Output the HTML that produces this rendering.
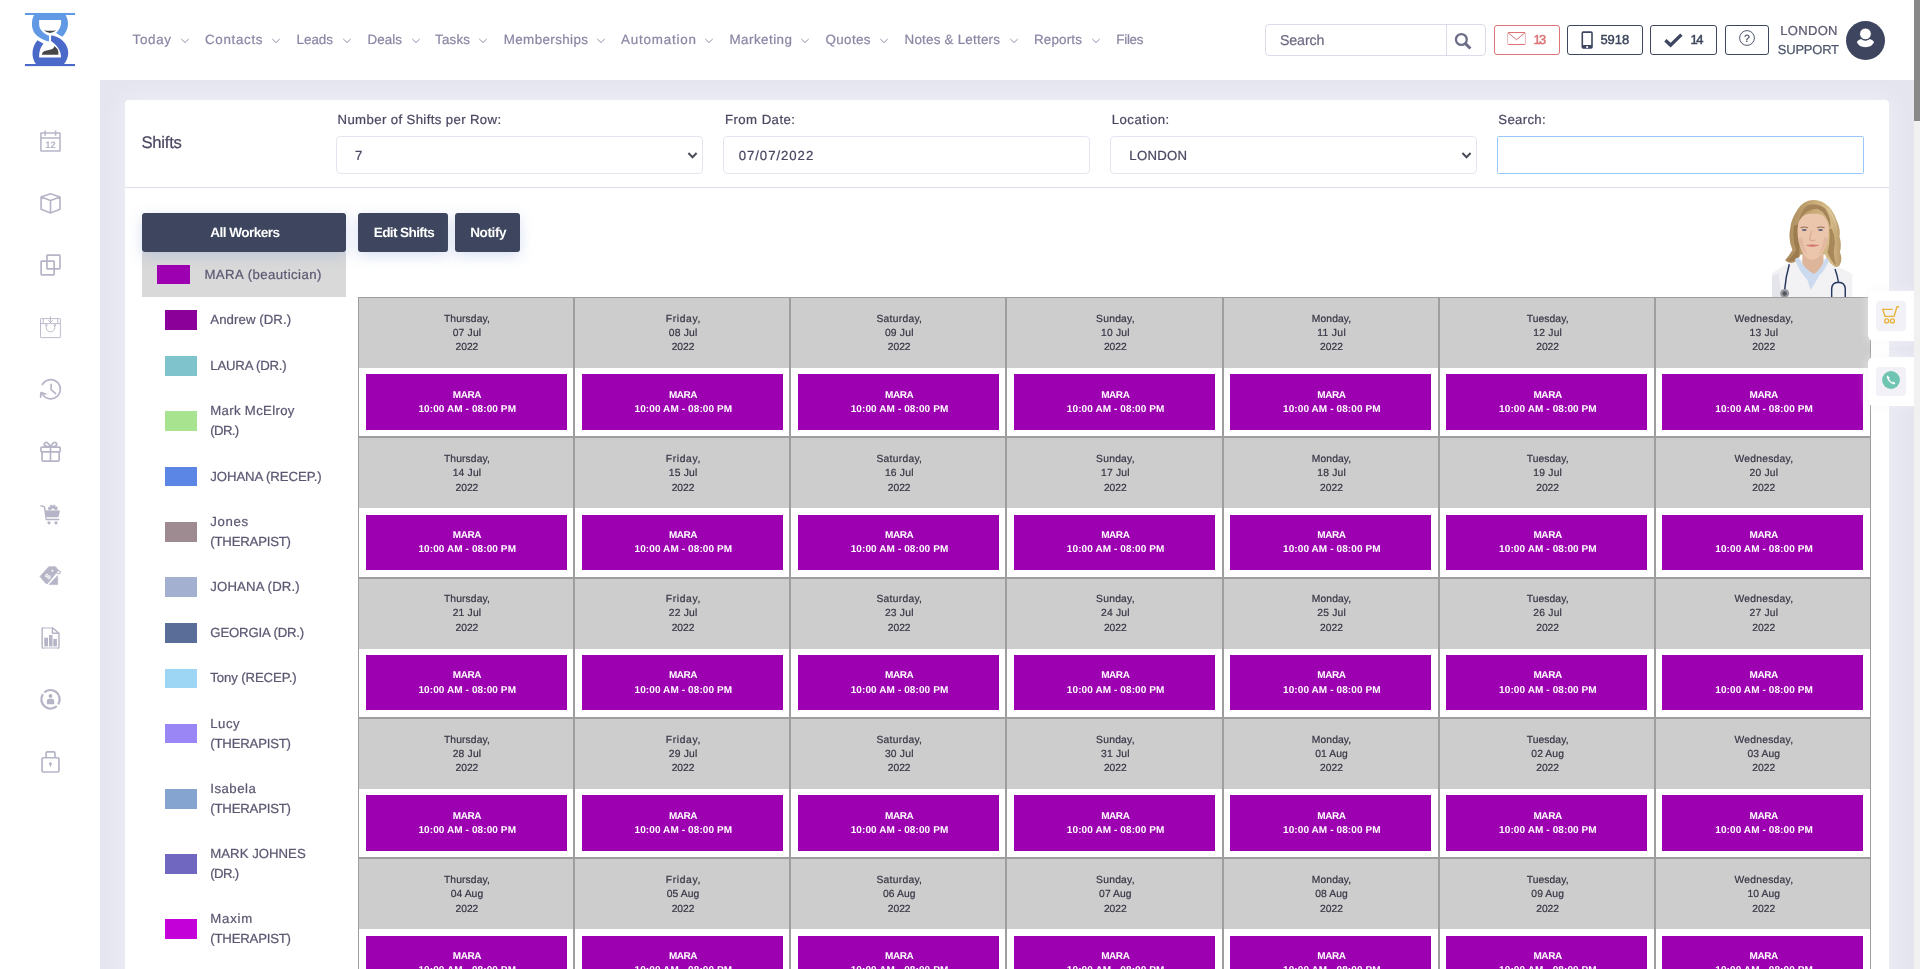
<!DOCTYPE html>
<html lang="en"><head><meta charset="utf-8"><title>Shifts</title>
<style>
html,body{margin:0;padding:0;overflow:hidden}
#app{position:absolute;left:0;top:0;width:1920px;height:969px;overflow:hidden;will-change:transform}
body{width:1920px;height:969px;overflow:hidden;position:relative;background:#e4e5ef;font-family:"Liberation Sans",sans-serif;text-rendering:geometricPrecision}
.t{position:absolute;white-space:nowrap;margin:0;padding:0;-webkit-text-stroke:0.22px}
.b{position:absolute;box-sizing:border-box}
svg{position:absolute;overflow:visible}
</style></head><body>
<div id="app">
<div class="card-bg">
<div class="b" style="left:125px;top:100px;width:1764px;height:900px;background:#fff;border-radius:4px;box-shadow:0 0 22px 5px rgba(255,255,255,.32)"></div>
<div class="b" style="left:125px;top:187px;width:1764px;height:1px;background:#dcdcea"></div>
</div>
<aside class="sidebar">
<div class="b" style="left:0px;top:80px;width:100px;height:889px;background:#fff"></div>
<svg style="left:40px;top:131px" width="21" height="21" viewBox="0 0 21 21" fill="none" stroke="#b6b5c7" stroke-width="1.55"><rect x="0.9" y="2" width="19.1" height="18" rx="0.3"/><path d="M0.9 6.95 H20 M5.1 -0.6 V4.7 M15.6 -0.6 V4.7"/><text x="10.55" y="16.9" font-family="Liberation Sans, sans-serif" font-size="9.4" font-weight="700" text-anchor="middle" fill="#b6b5c7" stroke="none">12</text></svg>
<svg style="left:40px;top:193px" width="21" height="21" viewBox="0 0 21 21" fill="none" stroke="#b6b5c7" stroke-width="1.55"><path d="M10.5 0.8 L20 4 V16.3 L10.5 19.9 L1.1 16.3 V4 Z M1.1 4 L10.5 7.6 L20 4 M10.5 7.6 V19.9" stroke-width="1.65" stroke-linejoin="round"/></svg>
<svg style="left:40px;top:255px" width="21" height="21" viewBox="0 0 21 21" fill="none" stroke="#b6b5c7" stroke-width="1.55"><rect x="6.95" y="0.15" width="13" height="13.8" rx="0.6" stroke-width="1.7"/><rect x="1.1" y="6.15" width="13.05" height="13.8" rx="0.6" stroke-width="1.7"/></svg>
<svg style="left:40px;top:317px" width="21" height="21" viewBox="0 0 21 21" fill="none" stroke="#b6b5c7" stroke-width="1.55"><g stroke-width="0.9"><rect x="0.5" y="1.6" width="19.9" height="19" rx="0.6"/><path d="M0.5 6.6 H20.4 M3.2 1.6 V6.6 M17.7 1.6 V6.6 M10.45 -0.7 V5.9 M8.2 3.2 L10.45 5.6 L12.7 3.2 M6.3 8.6 V10.6 A4.25 4.25 0 0 0 14.8 10.6 V8.6"/><circle cx="6.3" cy="8.2" r="0.8"/><circle cx="14.8" cy="8.2" r="0.8"/></g></svg>
<svg style="left:40px;top:379px" width="21" height="21" viewBox="0 0 21 21" fill="none" stroke="#b6b5c7" stroke-width="1.55"><path d="M2.35 5.5 A9.6 9.6 0 1 1 2.6 15.4 M0.6 18.2 L1 13.5 L5.6 15 M11.1 5.3 V10.7 L15.6 14.6" stroke-width="1.7" stroke-linecap="round" stroke-linejoin="round"/></svg>
<svg style="left:40px;top:441px" width="21" height="21" viewBox="0 0 21 21" fill="none" stroke="#b6b5c7" stroke-width="1.55"><g stroke-width="1.7" stroke-linejoin="round"><rect x="0.95" y="6.15" width="19.2" height="4.7" rx="0.8"/><path d="M2.05 10.85 V19 Q2.05 20.15 3.2 20.15 H18 Q19.15 20.15 19.15 19 V10.85 M10.5 6.15 V20.15 M10.5 6 C8.6 1.6 6 0.5 4.6 2.2 C3.4 3.9 5 6 10.5 6 C16 6 17.6 3.9 16.4 2.2 C15 0.5 12.4 1.6 10.5 6"/></g></svg>
<svg style="left:40px;top:503px" width="21" height="22" viewBox="0 0 21 22"><path d="M1 3 Q3.8 2.7 4.6 4.4 L6.3 16.6 H18.7" fill="none" stroke="#b6b5c7" stroke-width="1.5" stroke-linecap="round" stroke-linejoin="round"/><path d="M12.9 2.4 A4.4 4.4 0 0 1 17.3 7.4 H14.9 A2 2 0 0 0 10.9 7.4 H8.5 A4.4 4.4 0 0 1 12.9 2.4 Z" fill="#b6b5c7"/><circle cx="12.9" cy="6.9" r="4.7" fill="none" stroke="#b6b5c7" stroke-width="1.5" stroke-dasharray="1.64 1.64" stroke-dashoffset="0.8" clip-path="inset(0 0 0 0)"/><rect x="7" y="7" width="12" height="1" fill="#fff"/><path d="M5.4 7.2 L20 7.6 L18.5 13.9 H6.3 Z" fill="#b6b5c7"/><rect x="6.6" y="14.3" width="11.8" height="1.5" fill="#e6e6ec"/><circle cx="9" cy="19.8" r="1.6" fill="#b6b5c7"/><circle cx="16" cy="19.8" r="1.6" fill="#b6b5c7"/></svg>
<svg style="left:40px;top:565px" width="22" height="21" viewBox="0 0 22 21"><path d="M0 11.5 L8.8 1.8 H15.6 L18.2 5.4 L7.4 18.7 L5.6 18.2 Z" fill="#b6b5c7" stroke="#b6b5c7" stroke-width="0.8" stroke-linejoin="round"/><path d="M9 19.6 L17.7 10.4 V19.6 Z" fill="#b6b5c7" stroke="#b6b5c7" stroke-width="0.6" stroke-linejoin="round"/><circle cx="12.4" cy="5.7" r="1" fill="#fff"/><ellipse cx="17.6" cy="6.6" rx="3" ry="1.5" transform="rotate(32 17.6 6.6)" fill="none" stroke="#b6b5c7" stroke-width="1.1"/><text x="7.9" y="14.2" font-family="Liberation Sans, sans-serif" font-size="8" font-weight="700" text-anchor="middle" fill="#fff" transform="rotate(-45 7.9 11.4)">$</text></svg>
<svg style="left:40px;top:627px" width="21" height="22" viewBox="0 0 21 22"><path d="M2.15 2 Q2.15 0.75 3.4 0.75 H12.4 L19 6.4 V19.9 Q19 21.15 17.75 21.15 H3.4 Q2.15 21.15 2.15 19.9 Z M12.4 0.75 V6.3 H19" fill="none" stroke="#b6b5c7" stroke-width="1.45" stroke-linejoin="round"/><path d="M3.6 0.75 H12 M3.6 21.15 H17.6" stroke="#dedee6" stroke-width="1.45"/><rect x="4.25" y="10.7" width="3.75" height="8.7" fill="#b6b5c7"/><rect x="9" y="8" width="3.5" height="11.4" fill="#b6b5c7"/><rect x="13.3" y="11.9" width="3.6" height="7.5" fill="#b6b5c7"/></svg>
<svg style="left:40px;top:689px" width="21" height="21" viewBox="0 0 21 21"><circle cx="10.5" cy="10.3" r="9.2" fill="none" stroke="#b6b5c7" stroke-width="2.3" stroke-dasharray="26.7 2.2" stroke-dashoffset="26.7" transform="rotate(33 10.5 10.3)"/><circle cx="10.5" cy="7.05" r="1.95" fill="#b6b5c7"/><path d="M6.9 15.2 V12 Q6.9 9.8 9 9.7 H12 Q14.2 9.8 14.2 12 V15.2 Z" fill="#b6b5c7"/></svg>
<svg style="left:40px;top:751px" width="21" height="23" viewBox="0 0 21 23"><rect x="2.05" y="6.75" width="16.9" height="14.25" rx="1.3" fill="none" stroke="#b6b5c7" stroke-width="1.7"/><path d="M6.15 6.75 V2 Q6.15 0.95 7.2 0.95 H13.9 Q14.95 0.95 14.95 2 V6.75" fill="none" stroke="#b6b5c7" stroke-width="1.7"/><circle cx="10.45" cy="12.8" r="1.45" fill="#b6b5c7"/><path d="M9.5 13.4 L10.45 16.6 L11.4 13.4 Z" fill="#b6b5c7"/></svg>
</aside>
<header class="topbar">
<div class="b" style="left:0px;top:0px;width:1914px;height:80px;background:#fff"></div>
<svg style="left:20px;top:8px" width="60" height="64" viewBox="0 0 908 969">
<rect x="75" y="75" width="758" height="31" fill="#5f9ae6"/>
<rect x="75" y="848" width="758" height="32" fill="#4a69c9"/>
<path d="M215 105 C166 180 158 340 262 424 C320 468 380 494 437 508 L441 420 C380 400 318 350 296 290 C287 250 290 210 290 180 L620 180 C627 235 622 300 545 380 L640 436 C742 330 748 200 690 105 Z" fill="#6199e4"/>
<path d="M240 848 C172 760 165 600 265 490 L356 541 C300 600 288 680 290 750 L620 750 C623 690 600 590 470 500 L470 418 C560 426 672 482 716 600 C748 690 722 780 665 848 Z" fill="#4a69c9"/>
<path d="M362 336 Q455 352 548 336 Q500 378 455 378 Q410 378 362 336 Z" fill="#474747"/>
<path d="M330 706 Q332 668 372 652 Q440 640 490 622 Q515 605 520 574 Q570 610 580 660 L582 706 Z" fill="#474747"/>
</svg>
<div class="t" style="left:132.50px;top:30px;font-size:13.40px;line-height:19px;color:#8a87a5;letter-spacing:0.686px;">Today</div>
<svg style="left:180.20px;top:38px" width="10" height="6" viewBox="0 0 10 6"><path d="M1.3 1 L5 4.6 L8.7 1" fill="none" stroke="#8a87a5" stroke-width="0.95"/></svg>
<div class="t" style="left:205.00px;top:30px;font-size:13.40px;line-height:19px;color:#8a87a5;letter-spacing:0.660px;">Contacts</div>
<svg style="left:271.20px;top:38px" width="10" height="6" viewBox="0 0 10 6"><path d="M1.3 1 L5 4.6 L8.7 1" fill="none" stroke="#8a87a5" stroke-width="0.95"/></svg>
<div class="t" style="left:296.50px;top:30px;font-size:13.40px;line-height:19px;color:#8a87a5;letter-spacing:-0.002px;">Leads</div>
<svg style="left:342.20px;top:38px" width="10" height="6" viewBox="0 0 10 6"><path d="M1.3 1 L5 4.6 L8.7 1" fill="none" stroke="#8a87a5" stroke-width="0.95"/></svg>
<div class="t" style="left:367.50px;top:30px;font-size:13.40px;line-height:19px;color:#8a87a5;letter-spacing:0.060px;">Deals</div>
<svg style="left:411.20px;top:38px" width="10" height="6" viewBox="0 0 10 6"><path d="M1.3 1 L5 4.6 L8.7 1" fill="none" stroke="#8a87a5" stroke-width="0.95"/></svg>
<div class="t" style="left:435.00px;top:30px;font-size:13.40px;line-height:19px;color:#8a87a5;letter-spacing:0.187px;">Tasks</div>
<svg style="left:478.20px;top:38px" width="10" height="6" viewBox="0 0 10 6"><path d="M1.3 1 L5 4.6 L8.7 1" fill="none" stroke="#8a87a5" stroke-width="0.95"/></svg>
<div class="t" style="left:503.75px;top:30px;font-size:13.40px;line-height:19px;color:#8a87a5;letter-spacing:0.382px;">Memberships</div>
<svg style="left:595.95px;top:38px" width="10" height="6" viewBox="0 0 10 6"><path d="M1.3 1 L5 4.6 L8.7 1" fill="none" stroke="#8a87a5" stroke-width="0.95"/></svg>
<div class="t" style="left:621.00px;top:30px;font-size:13.40px;line-height:19px;color:#8a87a5;letter-spacing:0.802px;">Automation</div>
<svg style="left:703.95px;top:38px" width="10" height="6" viewBox="0 0 10 6"><path d="M1.3 1 L5 4.6 L8.7 1" fill="none" stroke="#8a87a5" stroke-width="0.95"/></svg>
<div class="t" style="left:729.50px;top:30px;font-size:13.40px;line-height:19px;color:#8a87a5;letter-spacing:0.458px;">Marketing</div>
<svg style="left:800.40px;top:38px" width="10" height="6" viewBox="0 0 10 6"><path d="M1.3 1 L5 4.6 L8.7 1" fill="none" stroke="#8a87a5" stroke-width="0.95"/></svg>
<div class="t" style="left:825.50px;top:30px;font-size:13.40px;line-height:19px;color:#8a87a5;letter-spacing:0.360px;">Quotes</div>
<svg style="left:879.20px;top:38px" width="10" height="6" viewBox="0 0 10 6"><path d="M1.3 1 L5 4.6 L8.7 1" fill="none" stroke="#8a87a5" stroke-width="0.95"/></svg>
<div class="t" style="left:904.50px;top:30px;font-size:13.40px;line-height:19px;color:#8a87a5;letter-spacing:0.225px;">Notes &amp; Letters</div>
<svg style="left:1008.60px;top:38px" width="10" height="6" viewBox="0 0 10 6"><path d="M1.3 1 L5 4.6 L8.7 1" fill="none" stroke="#8a87a5" stroke-width="0.95"/></svg>
<div class="t" style="left:1034.00px;top:30px;font-size:13.40px;line-height:19px;color:#8a87a5;letter-spacing:0.180px;">Reports</div>
<svg style="left:1090.60px;top:38px" width="10" height="6" viewBox="0 0 10 6"><path d="M1.3 1 L5 4.6 L8.7 1" fill="none" stroke="#8a87a5" stroke-width="0.95"/></svg>
<div class="t" style="left:1116.25px;top:30px;font-size:13.40px;line-height:19px;color:#8a87a5;letter-spacing:-0.261px;">Files</div>
<div class="b" style="left:1265px;top:24px;width:221px;height:32px;border:1px solid #dcdbeb;border-radius:4px;background:#fff"></div>
<div class="b" style="left:1446px;top:25px;width:1px;height:30px;background:#dcdbeb"></div>
<div class="t" style="left:1280.00px;top:31px;font-size:14.20px;line-height:20px;color:#6c6981;letter-spacing:-0.119px;">Search</div>
<svg style="left:1454px;top:32px" width="19" height="19" viewBox="0 0 19 19"><circle cx="7.36" cy="7.5" r="5.4" fill="none" stroke="#6c6e88" stroke-width="2.3"/><path d="M11.2 11.4 L16.4 16.5" stroke="#6c6e88" stroke-width="3"/></svg>
<div class="b" style="left:1494px;top:25px;width:66px;height:30px;border:1px solid #dc7476;border-radius:3px;background:#fff"></div>
<svg style="left:1507px;top:31px" width="19" height="15" viewBox="0 0 19 15"><rect x="0.6" y="1.5" width="17.8" height="12" rx="0.9" fill="none" stroke="#dc7476" stroke-width="1" stroke-opacity=".5"/><path d="M1.2 1.5 H17.8 M1.2 13.5 H17.8" stroke="#dc7476" stroke-width="1"/><path d="M1 1.7 L9.5 8.7 L18 1.7" fill="none" stroke="#dc7476" stroke-width="1"/></svg>
<div class="t" style="left:1533.50px;top:30px;font-size:13.00px;line-height:19px;color:#dc7476;letter-spacing:-1.711px;-webkit-text-stroke:0.45px;">13</div>
<div class="b" style="left:1567px;top:25px;width:76px;height:30px;border:1px solid #3d465e;border-radius:3px;background:#fff"></div>
<svg style="left:1581px;top:31px" width="12" height="18" viewBox="0 0 12 18"><path d="M2.3 0.2 H10 A1.8 1.8 0 0 1 11.8 2 V16 A1.8 1.8 0 0 1 10 17.8 H2.3 A1.8 1.8 0 0 1 0.5 16 V2 A1.8 1.8 0 0 1 2.3 0.2 Z M2.1 2 V13.9 H10.2 V2 Z M6.15 14.9 A1.1 1.1 0 1 0 6.16 14.9 Z" fill="#3d465e" fill-rule="evenodd"/></svg>
<div class="t" style="left:1600.40px;top:30px;font-size:13.00px;line-height:19px;color:#3d465e;letter-spacing:-0.007px;-webkit-text-stroke:0.45px;">5918</div>
<div class="b" style="left:1650px;top:25px;width:67px;height:30px;border:1px solid #3d465e;border-radius:3px;background:#fff"></div>
<svg style="left:1664px;top:33px" width="19" height="14" viewBox="0 0 19 14"><path d="M1.4 7.2 L6.6 12.2 L17.4 1.6" fill="none" stroke="#3d465e" stroke-width="3.4"/></svg>
<div class="t" style="left:1690.50px;top:30px;font-size:13.00px;line-height:19px;color:#3d465e;letter-spacing:-1.361px;-webkit-text-stroke:0.45px;">14</div>
<div class="b" style="left:1725px;top:25px;width:44px;height:30px;border:1px solid #3d465e;border-radius:3px;background:#fff"></div>
<svg style="left:1739px;top:30px" width="16" height="16" viewBox="0 0 16 16"><circle cx="8" cy="8" r="7.4" fill="none" stroke="#3d465e" stroke-width="0.9"/></svg>
<div class="t" style="left:1744.08px;top:31px;font-size:10.50px;line-height:16px;color:#3d465e;letter-spacing:0.000px;">?</div>
<div class="t" style="left:1780.30px;top:21px;font-size:13.00px;line-height:19px;color:#5d5770;letter-spacing:0.317px;">LONDON</div>
<div class="t" style="left:1777.80px;top:40px;font-size:13.00px;line-height:19px;color:#4b566b;letter-spacing:-0.235px;">SUPPORT</div>
<svg style="left:1846px;top:21px" width="39" height="39" viewBox="0 0 39 39"><circle cx="19.5" cy="19.5" r="19.5" fill="#3d465e"/><path d="M10.8 21 Q12 18.6 15 17.9 Q19.45 21.4 23.9 17.9 Q26.9 18.6 28.1 21 Q26 26.2 19.45 26.2 Q12.9 26.2 10.8 21 Z" fill="#fff"/><circle cx="19.45" cy="12.9" r="5.9" fill="#fff" stroke="#3d465e" stroke-width="1"/></svg>
</header>
<main class="content">
<div class="t" style="left:141.50px;top:131px;font-size:16.70px;line-height:23px;color:#4b4761;letter-spacing:-0.273px;">Shifts</div>
<div class="t" style="left:337.50px;top:110px;font-size:13.20px;line-height:19px;color:#4b4761;letter-spacing:0.374px;">Number of Shifts per Row:</div>
<div class="t" style="left:725.00px;top:110px;font-size:13.20px;line-height:19px;color:#4b4761;letter-spacing:0.444px;">From Date:</div>
<div class="t" style="left:1111.70px;top:110px;font-size:13.20px;line-height:19px;color:#4b4761;letter-spacing:0.505px;">Location:</div>
<div class="t" style="left:1498.30px;top:110px;font-size:13.20px;line-height:19px;color:#4b4761;letter-spacing:0.319px;">Search:</div>
<div class="b" style="left:336.2px;top:136px;width:366.6px;height:38px;border:1px solid #e4e5ef;border-radius:4px;background:#fff"></div>
<div class="b" style="left:723.2px;top:136px;width:366.6px;height:38px;border:1px solid #e4e5ef;border-radius:4px;background:#fff"></div>
<div class="b" style="left:1110.2px;top:136px;width:366.6px;height:38px;border:1px solid #e4e5ef;border-radius:4px;background:#fff"></div>
<div class="b" style="left:1497.2px;top:136px;width:366.6px;height:38px;border:1px solid #96c8fa;border-radius:1.5px;background:#fff"></div>
<div class="t" style="left:355.00px;top:146px;font-size:13.20px;line-height:19px;color:#4b4761;letter-spacing:-0.589px;">7</div>
<div class="t" style="left:738.70px;top:146px;font-size:13.20px;line-height:19px;color:#4b4761;letter-spacing:0.950px;">07/07/2022</div>
<div class="t" style="left:1129.30px;top:146px;font-size:13.20px;line-height:19px;color:#4b4761;letter-spacing:0.245px;">LONDON</div>
<svg style="left:687.0px;top:150.5px" width="11" height="9" viewBox="0 0 11 9"><path d="M1.4 2 L5.5 6.2 L9.6 2" fill="none" stroke="#4a4d59" stroke-width="2"/></svg>
<svg style="left:1461.0px;top:150.5px" width="11" height="9" viewBox="0 0 11 9"><path d="M1.4 2 L5.5 6.2 L9.6 2" fill="none" stroke="#4a4d59" stroke-width="2"/></svg>
<div class="b" style="left:142px;top:252px;width:204px;height:45px;background:#d9d9d9"></div>
<div class="b" style="left:142px;top:213px;width:204px;height:39px;background:#3d465e;border-radius:3px;box-shadow:0 4px 14px rgba(140,165,215,.34);"></div>
<div class="b" style="left:358px;top:213px;width:90px;height:39px;background:#3d465e;border-radius:3px;box-shadow:0 4px 14px rgba(140,165,215,.34);"></div>
<div class="b" style="left:455px;top:213px;width:65px;height:39px;background:#3d465e;border-radius:3px;box-shadow:0 4px 14px rgba(140,165,215,.34);"></div>
<div class="t" style="left:210.25px;top:223px;font-size:13.60px;line-height:19px;color:#fff;font-weight:700;-webkit-text-stroke:0;letter-spacing:-0.558px;">All Workers</div>
<div class="t" style="left:373.75px;top:223px;font-size:13.60px;line-height:19px;color:#fff;font-weight:700;-webkit-text-stroke:0;letter-spacing:-0.624px;">Edit Shifts</div>
<div class="t" style="left:470.20px;top:223px;font-size:13.60px;line-height:19px;color:#fff;font-weight:700;-webkit-text-stroke:0;letter-spacing:-0.406px;">Notify</div>
<div class="b" style="left:157px;top:265px;width:33px;height:19px;background:#9d00b1"></div>
<div class="t" style="left:204.40px;top:265px;font-size:13.20px;line-height:19px;color:#5b5771;letter-spacing:0.441px;">MARA (beautician)</div>
<div class="b" style="left:165px;top:310.4px;width:32px;height:19.5px;background:#8b0099"></div>
<div class="t" style="left:210.30px;top:310px;font-size:13.20px;line-height:19px;color:#5b5771;letter-spacing:0.087px;">Andrew (DR.)</div>
<div class="b" style="left:165px;top:356px;width:32px;height:19.5px;background:#7fc4cc"></div>
<div class="t" style="left:210.30px;top:356px;font-size:13.20px;line-height:19px;color:#5b5771;letter-spacing:-0.208px;">LAURA (DR.)</div>
<div class="b" style="left:165px;top:411.35px;width:32px;height:19.5px;background:#a8e490"></div>
<div class="t" style="left:210.30px;top:401px;font-size:13.20px;line-height:19px;color:#5b5771;letter-spacing:0.321px;">Mark McElroy</div>
<div class="t" style="left:210.30px;top:421px;font-size:13.20px;line-height:19px;color:#5b5771;letter-spacing:-0.657px;">(DR.)</div>
<div class="b" style="left:165px;top:466.7px;width:32px;height:19.5px;background:#5b86e5"></div>
<div class="t" style="left:210.30px;top:467px;font-size:13.20px;line-height:19px;color:#5b5771;letter-spacing:-0.094px;">JOHANA (RECEP.)</div>
<div class="b" style="left:165px;top:522.05px;width:32px;height:19.5px;background:#9d8b91"></div>
<div class="t" style="left:210.30px;top:512px;font-size:13.20px;line-height:19px;color:#5b5771;letter-spacing:0.670px;">Jones</div>
<div class="t" style="left:210.30px;top:532px;font-size:13.20px;line-height:19px;color:#5b5771;letter-spacing:-0.207px;">(THERAPIST)</div>
<div class="b" style="left:165px;top:577.4px;width:32px;height:19.5px;background:#a3b0d0"></div>
<div class="t" style="left:210.30px;top:577px;font-size:13.20px;line-height:19px;color:#5b5771;letter-spacing:0.127px;">JOHANA (DR.)</div>
<div class="b" style="left:165px;top:623px;width:32px;height:19.5px;background:#5a6c98"></div>
<div class="t" style="left:210.30px;top:623px;font-size:13.20px;line-height:19px;color:#5b5771;letter-spacing:-0.172px;">GEORGIA (DR.)</div>
<div class="b" style="left:165px;top:668.6px;width:32px;height:19.5px;background:#9dd5f5"></div>
<div class="t" style="left:210.30px;top:668px;font-size:13.20px;line-height:19px;color:#5b5771;letter-spacing:-0.115px;">Tony (RECEP.)</div>
<div class="b" style="left:165px;top:723.95px;width:32px;height:19.5px;background:#9a86f5"></div>
<div class="t" style="left:210.30px;top:714px;font-size:13.20px;line-height:19px;color:#5b5771;letter-spacing:0.474px;">Lucy</div>
<div class="t" style="left:210.30px;top:734px;font-size:13.20px;line-height:19px;color:#5b5771;letter-spacing:-0.207px;">(THERAPIST)</div>
<div class="b" style="left:165px;top:789.05px;width:32px;height:19.5px;background:#85a5d0"></div>
<div class="t" style="left:210.30px;top:779px;font-size:13.20px;line-height:19px;color:#5b5771;letter-spacing:0.490px;">Isabela</div>
<div class="t" style="left:210.30px;top:799px;font-size:13.20px;line-height:19px;color:#5b5771;letter-spacing:-0.207px;">(THERAPIST)</div>
<div class="b" style="left:165px;top:854.15px;width:32px;height:19.5px;background:#7068c0"></div>
<div class="t" style="left:210.30px;top:844px;font-size:13.20px;line-height:19px;color:#5b5771;letter-spacing:0.016px;">MARK JOHNES</div>
<div class="t" style="left:210.30px;top:864px;font-size:13.20px;line-height:19px;color:#5b5771;letter-spacing:-0.657px;">(DR.)</div>
<div class="b" style="left:165px;top:919.25px;width:32px;height:19.5px;background:#c400d8"></div>
<div class="t" style="left:210.30px;top:909px;font-size:13.20px;line-height:19px;color:#5b5771;letter-spacing:0.783px;">Maxim</div>
<div class="t" style="left:210.30px;top:929px;font-size:13.20px;line-height:19px;color:#5b5771;letter-spacing:-0.207px;">(THERAPIST)</div>
<div class="b" style="left:358px;top:297px;width:216.143px;height:140.333px;border:1px solid #9e9e9e;background:#fff"></div>
<div class="b" style="left:359px;top:298px;width:214.143px;height:70px;background:#cdcdcd"></div>
<div class="b" style="left:365.5px;top:374.4px;width:201px;height:55.2px;background:#9d00b1"></div>
<div class="t" style="left:443.95px;top:312px;font-size:10.30px;line-height:15px;color:#3a3646;letter-spacing:0.109px;">Thursday,</div>
<div class="t" style="left:452.65px;top:326px;font-size:10.30px;line-height:15px;color:#3a3646;letter-spacing:0.204px;">07 Jul</div>
<div class="t" style="left:455.50px;top:340px;font-size:10.30px;line-height:15px;color:#3a3646;letter-spacing:-0.036px;">2022</div>
<div class="t" style="left:452.75px;top:388px;font-size:10.00px;line-height:15px;color:#fff;font-weight:700;-webkit-text-stroke:0;letter-spacing:-0.433px;">MARA</div>
<div class="t" style="left:418.40px;top:402px;font-size:10.00px;line-height:15px;color:#fff;font-weight:700;-webkit-text-stroke:0;letter-spacing:0.100px;">10:00 AM - 08:00 PM</div>
<div class="b" style="left:574.14px;top:297px;width:216.143px;height:140.333px;border:1px solid #9e9e9e;background:#fff"></div>
<div class="b" style="left:575.14px;top:298px;width:214.143px;height:70px;background:#cdcdcd"></div>
<div class="b" style="left:581.64px;top:374.4px;width:201px;height:55.2px;background:#9d00b1"></div>
<div class="t" style="left:665.79px;top:312px;font-size:10.30px;line-height:15px;color:#3a3646;letter-spacing:0.631px;">Friday,</div>
<div class="t" style="left:668.79px;top:326px;font-size:10.30px;line-height:15px;color:#3a3646;letter-spacing:0.204px;">08 Jul</div>
<div class="t" style="left:671.64px;top:340px;font-size:10.30px;line-height:15px;color:#3a3646;letter-spacing:-0.036px;">2022</div>
<div class="t" style="left:668.89px;top:388px;font-size:10.00px;line-height:15px;color:#fff;font-weight:700;-webkit-text-stroke:0;letter-spacing:-0.433px;">MARA</div>
<div class="t" style="left:634.54px;top:402px;font-size:10.00px;line-height:15px;color:#fff;font-weight:700;-webkit-text-stroke:0;letter-spacing:0.100px;">10:00 AM - 08:00 PM</div>
<div class="b" style="left:790.29px;top:297px;width:216.143px;height:140.333px;border:1px solid #9e9e9e;background:#fff"></div>
<div class="b" style="left:791.29px;top:298px;width:214.143px;height:70px;background:#cdcdcd"></div>
<div class="b" style="left:797.79px;top:374.4px;width:201px;height:55.2px;background:#9d00b1"></div>
<div class="t" style="left:876.44px;top:312px;font-size:10.30px;line-height:15px;color:#3a3646;letter-spacing:0.273px;">Saturday,</div>
<div class="t" style="left:884.94px;top:326px;font-size:10.30px;line-height:15px;color:#3a3646;letter-spacing:0.204px;">09 Jul</div>
<div class="t" style="left:887.79px;top:340px;font-size:10.30px;line-height:15px;color:#3a3646;letter-spacing:-0.036px;">2022</div>
<div class="t" style="left:885.04px;top:388px;font-size:10.00px;line-height:15px;color:#fff;font-weight:700;-webkit-text-stroke:0;letter-spacing:-0.433px;">MARA</div>
<div class="t" style="left:850.69px;top:402px;font-size:10.00px;line-height:15px;color:#fff;font-weight:700;-webkit-text-stroke:0;letter-spacing:0.100px;">10:00 AM - 08:00 PM</div>
<div class="b" style="left:1006.43px;top:297px;width:216.143px;height:140.333px;border:1px solid #9e9e9e;background:#fff"></div>
<div class="b" style="left:1007.43px;top:298px;width:214.143px;height:70px;background:#cdcdcd"></div>
<div class="b" style="left:1013.93px;top:374.4px;width:201px;height:55.2px;background:#9d00b1"></div>
<div class="t" style="left:1096.08px;top:312px;font-size:10.30px;line-height:15px;color:#3a3646;letter-spacing:0.246px;">Sunday,</div>
<div class="t" style="left:1101.08px;top:326px;font-size:10.30px;line-height:15px;color:#3a3646;letter-spacing:0.204px;">10 Jul</div>
<div class="t" style="left:1103.93px;top:340px;font-size:10.30px;line-height:15px;color:#3a3646;letter-spacing:-0.036px;">2022</div>
<div class="t" style="left:1101.18px;top:388px;font-size:10.00px;line-height:15px;color:#fff;font-weight:700;-webkit-text-stroke:0;letter-spacing:-0.433px;">MARA</div>
<div class="t" style="left:1066.83px;top:402px;font-size:10.00px;line-height:15px;color:#fff;font-weight:700;-webkit-text-stroke:0;letter-spacing:0.100px;">10:00 AM - 08:00 PM</div>
<div class="b" style="left:1222.57px;top:297px;width:216.143px;height:140.333px;border:1px solid #9e9e9e;background:#fff"></div>
<div class="b" style="left:1223.57px;top:298px;width:214.143px;height:70px;background:#cdcdcd"></div>
<div class="b" style="left:1230.07px;top:374.4px;width:201px;height:55.2px;background:#9d00b1"></div>
<div class="t" style="left:1311.72px;top:312px;font-size:10.30px;line-height:15px;color:#3a3646;letter-spacing:0.128px;">Monday,</div>
<div class="t" style="left:1317.22px;top:326px;font-size:10.30px;line-height:15px;color:#3a3646;letter-spacing:0.357px;">11 Jul</div>
<div class="t" style="left:1320.07px;top:340px;font-size:10.30px;line-height:15px;color:#3a3646;letter-spacing:-0.036px;">2022</div>
<div class="t" style="left:1317.32px;top:388px;font-size:10.00px;line-height:15px;color:#fff;font-weight:700;-webkit-text-stroke:0;letter-spacing:-0.433px;">MARA</div>
<div class="t" style="left:1282.97px;top:402px;font-size:10.00px;line-height:15px;color:#fff;font-weight:700;-webkit-text-stroke:0;letter-spacing:0.100px;">10:00 AM - 08:00 PM</div>
<div class="b" style="left:1438.71px;top:297px;width:216.143px;height:140.333px;border:1px solid #9e9e9e;background:#fff"></div>
<div class="b" style="left:1439.71px;top:298px;width:214.143px;height:70px;background:#cdcdcd"></div>
<div class="b" style="left:1446.21px;top:374.4px;width:201px;height:55.2px;background:#9d00b1"></div>
<div class="t" style="left:1526.71px;top:312px;font-size:10.30px;line-height:15px;color:#3a3646;letter-spacing:0.083px;">Tuesday,</div>
<div class="t" style="left:1533.36px;top:326px;font-size:10.30px;line-height:15px;color:#3a3646;letter-spacing:0.204px;">12 Jul</div>
<div class="t" style="left:1536.21px;top:340px;font-size:10.30px;line-height:15px;color:#3a3646;letter-spacing:-0.036px;">2022</div>
<div class="t" style="left:1533.46px;top:388px;font-size:10.00px;line-height:15px;color:#fff;font-weight:700;-webkit-text-stroke:0;letter-spacing:-0.433px;">MARA</div>
<div class="t" style="left:1499.11px;top:402px;font-size:10.00px;line-height:15px;color:#fff;font-weight:700;-webkit-text-stroke:0;letter-spacing:0.100px;">10:00 AM - 08:00 PM</div>
<div class="b" style="left:1654.86px;top:297px;width:216.143px;height:140.333px;border:1px solid #9e9e9e;background:#fff"></div>
<div class="b" style="left:1655.86px;top:298px;width:214.143px;height:70px;background:#cdcdcd"></div>
<div class="b" style="left:1662.36px;top:374.4px;width:201px;height:55.2px;background:#9d00b1"></div>
<div class="t" style="left:1734.51px;top:312px;font-size:10.30px;line-height:15px;color:#3a3646;letter-spacing:0.245px;">Wednesday,</div>
<div class="t" style="left:1749.51px;top:326px;font-size:10.30px;line-height:15px;color:#3a3646;letter-spacing:0.204px;">13 Jul</div>
<div class="t" style="left:1752.36px;top:340px;font-size:10.30px;line-height:15px;color:#3a3646;letter-spacing:-0.036px;">2022</div>
<div class="t" style="left:1749.61px;top:388px;font-size:10.00px;line-height:15px;color:#fff;font-weight:700;-webkit-text-stroke:0;letter-spacing:-0.433px;">MARA</div>
<div class="t" style="left:1715.26px;top:402px;font-size:10.00px;line-height:15px;color:#fff;font-weight:700;-webkit-text-stroke:0;letter-spacing:0.100px;">10:00 AM - 08:00 PM</div>
<div class="b" style="left:358px;top:437.33px;width:216.143px;height:140.333px;border:1px solid #9e9e9e;background:#fff"></div>
<div class="b" style="left:359px;top:438.33px;width:214.143px;height:70px;background:#cdcdcd"></div>
<div class="b" style="left:365.5px;top:514.73px;width:201px;height:55.2px;background:#9d00b1"></div>
<div class="t" style="left:443.95px;top:452px;font-size:10.30px;line-height:15px;color:#3a3646;letter-spacing:0.109px;">Thursday,</div>
<div class="t" style="left:452.65px;top:466px;font-size:10.30px;line-height:15px;color:#3a3646;letter-spacing:0.204px;">14 Jul</div>
<div class="t" style="left:455.50px;top:481px;font-size:10.30px;line-height:15px;color:#3a3646;letter-spacing:-0.036px;">2022</div>
<div class="t" style="left:452.75px;top:528px;font-size:10.00px;line-height:15px;color:#fff;font-weight:700;-webkit-text-stroke:0;letter-spacing:-0.433px;">MARA</div>
<div class="t" style="left:418.40px;top:542px;font-size:10.00px;line-height:15px;color:#fff;font-weight:700;-webkit-text-stroke:0;letter-spacing:0.100px;">10:00 AM - 08:00 PM</div>
<div class="b" style="left:574.14px;top:437.33px;width:216.143px;height:140.333px;border:1px solid #9e9e9e;background:#fff"></div>
<div class="b" style="left:575.14px;top:438.33px;width:214.143px;height:70px;background:#cdcdcd"></div>
<div class="b" style="left:581.64px;top:514.73px;width:201px;height:55.2px;background:#9d00b1"></div>
<div class="t" style="left:665.79px;top:452px;font-size:10.30px;line-height:15px;color:#3a3646;letter-spacing:0.631px;">Friday,</div>
<div class="t" style="left:668.79px;top:466px;font-size:10.30px;line-height:15px;color:#3a3646;letter-spacing:0.204px;">15 Jul</div>
<div class="t" style="left:671.64px;top:481px;font-size:10.30px;line-height:15px;color:#3a3646;letter-spacing:-0.036px;">2022</div>
<div class="t" style="left:668.89px;top:528px;font-size:10.00px;line-height:15px;color:#fff;font-weight:700;-webkit-text-stroke:0;letter-spacing:-0.433px;">MARA</div>
<div class="t" style="left:634.54px;top:542px;font-size:10.00px;line-height:15px;color:#fff;font-weight:700;-webkit-text-stroke:0;letter-spacing:0.100px;">10:00 AM - 08:00 PM</div>
<div class="b" style="left:790.29px;top:437.33px;width:216.143px;height:140.333px;border:1px solid #9e9e9e;background:#fff"></div>
<div class="b" style="left:791.29px;top:438.33px;width:214.143px;height:70px;background:#cdcdcd"></div>
<div class="b" style="left:797.79px;top:514.73px;width:201px;height:55.2px;background:#9d00b1"></div>
<div class="t" style="left:876.44px;top:452px;font-size:10.30px;line-height:15px;color:#3a3646;letter-spacing:0.273px;">Saturday,</div>
<div class="t" style="left:884.94px;top:466px;font-size:10.30px;line-height:15px;color:#3a3646;letter-spacing:0.204px;">16 Jul</div>
<div class="t" style="left:887.79px;top:481px;font-size:10.30px;line-height:15px;color:#3a3646;letter-spacing:-0.036px;">2022</div>
<div class="t" style="left:885.04px;top:528px;font-size:10.00px;line-height:15px;color:#fff;font-weight:700;-webkit-text-stroke:0;letter-spacing:-0.433px;">MARA</div>
<div class="t" style="left:850.69px;top:542px;font-size:10.00px;line-height:15px;color:#fff;font-weight:700;-webkit-text-stroke:0;letter-spacing:0.100px;">10:00 AM - 08:00 PM</div>
<div class="b" style="left:1006.43px;top:437.33px;width:216.143px;height:140.333px;border:1px solid #9e9e9e;background:#fff"></div>
<div class="b" style="left:1007.43px;top:438.33px;width:214.143px;height:70px;background:#cdcdcd"></div>
<div class="b" style="left:1013.93px;top:514.73px;width:201px;height:55.2px;background:#9d00b1"></div>
<div class="t" style="left:1096.08px;top:452px;font-size:10.30px;line-height:15px;color:#3a3646;letter-spacing:0.246px;">Sunday,</div>
<div class="t" style="left:1101.08px;top:466px;font-size:10.30px;line-height:15px;color:#3a3646;letter-spacing:0.204px;">17 Jul</div>
<div class="t" style="left:1103.93px;top:481px;font-size:10.30px;line-height:15px;color:#3a3646;letter-spacing:-0.036px;">2022</div>
<div class="t" style="left:1101.18px;top:528px;font-size:10.00px;line-height:15px;color:#fff;font-weight:700;-webkit-text-stroke:0;letter-spacing:-0.433px;">MARA</div>
<div class="t" style="left:1066.83px;top:542px;font-size:10.00px;line-height:15px;color:#fff;font-weight:700;-webkit-text-stroke:0;letter-spacing:0.100px;">10:00 AM - 08:00 PM</div>
<div class="b" style="left:1222.57px;top:437.33px;width:216.143px;height:140.333px;border:1px solid #9e9e9e;background:#fff"></div>
<div class="b" style="left:1223.57px;top:438.33px;width:214.143px;height:70px;background:#cdcdcd"></div>
<div class="b" style="left:1230.07px;top:514.73px;width:201px;height:55.2px;background:#9d00b1"></div>
<div class="t" style="left:1311.72px;top:452px;font-size:10.30px;line-height:15px;color:#3a3646;letter-spacing:0.128px;">Monday,</div>
<div class="t" style="left:1317.22px;top:466px;font-size:10.30px;line-height:15px;color:#3a3646;letter-spacing:0.204px;">18 Jul</div>
<div class="t" style="left:1320.07px;top:481px;font-size:10.30px;line-height:15px;color:#3a3646;letter-spacing:-0.036px;">2022</div>
<div class="t" style="left:1317.32px;top:528px;font-size:10.00px;line-height:15px;color:#fff;font-weight:700;-webkit-text-stroke:0;letter-spacing:-0.433px;">MARA</div>
<div class="t" style="left:1282.97px;top:542px;font-size:10.00px;line-height:15px;color:#fff;font-weight:700;-webkit-text-stroke:0;letter-spacing:0.100px;">10:00 AM - 08:00 PM</div>
<div class="b" style="left:1438.71px;top:437.33px;width:216.143px;height:140.333px;border:1px solid #9e9e9e;background:#fff"></div>
<div class="b" style="left:1439.71px;top:438.33px;width:214.143px;height:70px;background:#cdcdcd"></div>
<div class="b" style="left:1446.21px;top:514.73px;width:201px;height:55.2px;background:#9d00b1"></div>
<div class="t" style="left:1526.71px;top:452px;font-size:10.30px;line-height:15px;color:#3a3646;letter-spacing:0.083px;">Tuesday,</div>
<div class="t" style="left:1533.36px;top:466px;font-size:10.30px;line-height:15px;color:#3a3646;letter-spacing:0.204px;">19 Jul</div>
<div class="t" style="left:1536.21px;top:481px;font-size:10.30px;line-height:15px;color:#3a3646;letter-spacing:-0.036px;">2022</div>
<div class="t" style="left:1533.46px;top:528px;font-size:10.00px;line-height:15px;color:#fff;font-weight:700;-webkit-text-stroke:0;letter-spacing:-0.433px;">MARA</div>
<div class="t" style="left:1499.11px;top:542px;font-size:10.00px;line-height:15px;color:#fff;font-weight:700;-webkit-text-stroke:0;letter-spacing:0.100px;">10:00 AM - 08:00 PM</div>
<div class="b" style="left:1654.86px;top:437.33px;width:216.143px;height:140.333px;border:1px solid #9e9e9e;background:#fff"></div>
<div class="b" style="left:1655.86px;top:438.33px;width:214.143px;height:70px;background:#cdcdcd"></div>
<div class="b" style="left:1662.36px;top:514.73px;width:201px;height:55.2px;background:#9d00b1"></div>
<div class="t" style="left:1734.51px;top:452px;font-size:10.30px;line-height:15px;color:#3a3646;letter-spacing:0.245px;">Wednesday,</div>
<div class="t" style="left:1749.51px;top:466px;font-size:10.30px;line-height:15px;color:#3a3646;letter-spacing:0.204px;">20 Jul</div>
<div class="t" style="left:1752.36px;top:481px;font-size:10.30px;line-height:15px;color:#3a3646;letter-spacing:-0.036px;">2022</div>
<div class="t" style="left:1749.61px;top:528px;font-size:10.00px;line-height:15px;color:#fff;font-weight:700;-webkit-text-stroke:0;letter-spacing:-0.433px;">MARA</div>
<div class="t" style="left:1715.26px;top:542px;font-size:10.00px;line-height:15px;color:#fff;font-weight:700;-webkit-text-stroke:0;letter-spacing:0.100px;">10:00 AM - 08:00 PM</div>
<div class="b" style="left:358px;top:577.67px;width:216.143px;height:140.333px;border:1px solid #9e9e9e;background:#fff"></div>
<div class="b" style="left:359px;top:578.67px;width:214.143px;height:70px;background:#cdcdcd"></div>
<div class="b" style="left:365.5px;top:655.07px;width:201px;height:55.2px;background:#9d00b1"></div>
<div class="t" style="left:443.95px;top:592px;font-size:10.30px;line-height:15px;color:#3a3646;letter-spacing:0.109px;">Thursday,</div>
<div class="t" style="left:452.65px;top:606px;font-size:10.30px;line-height:15px;color:#3a3646;letter-spacing:0.204px;">21 Jul</div>
<div class="t" style="left:455.50px;top:621px;font-size:10.30px;line-height:15px;color:#3a3646;letter-spacing:-0.036px;">2022</div>
<div class="t" style="left:452.75px;top:668px;font-size:10.00px;line-height:15px;color:#fff;font-weight:700;-webkit-text-stroke:0;letter-spacing:-0.433px;">MARA</div>
<div class="t" style="left:418.40px;top:683px;font-size:10.00px;line-height:15px;color:#fff;font-weight:700;-webkit-text-stroke:0;letter-spacing:0.100px;">10:00 AM - 08:00 PM</div>
<div class="b" style="left:574.14px;top:577.67px;width:216.143px;height:140.333px;border:1px solid #9e9e9e;background:#fff"></div>
<div class="b" style="left:575.14px;top:578.67px;width:214.143px;height:70px;background:#cdcdcd"></div>
<div class="b" style="left:581.64px;top:655.07px;width:201px;height:55.2px;background:#9d00b1"></div>
<div class="t" style="left:665.79px;top:592px;font-size:10.30px;line-height:15px;color:#3a3646;letter-spacing:0.631px;">Friday,</div>
<div class="t" style="left:668.79px;top:606px;font-size:10.30px;line-height:15px;color:#3a3646;letter-spacing:0.204px;">22 Jul</div>
<div class="t" style="left:671.64px;top:621px;font-size:10.30px;line-height:15px;color:#3a3646;letter-spacing:-0.036px;">2022</div>
<div class="t" style="left:668.89px;top:668px;font-size:10.00px;line-height:15px;color:#fff;font-weight:700;-webkit-text-stroke:0;letter-spacing:-0.433px;">MARA</div>
<div class="t" style="left:634.54px;top:683px;font-size:10.00px;line-height:15px;color:#fff;font-weight:700;-webkit-text-stroke:0;letter-spacing:0.100px;">10:00 AM - 08:00 PM</div>
<div class="b" style="left:790.29px;top:577.67px;width:216.143px;height:140.333px;border:1px solid #9e9e9e;background:#fff"></div>
<div class="b" style="left:791.29px;top:578.67px;width:214.143px;height:70px;background:#cdcdcd"></div>
<div class="b" style="left:797.79px;top:655.07px;width:201px;height:55.2px;background:#9d00b1"></div>
<div class="t" style="left:876.44px;top:592px;font-size:10.30px;line-height:15px;color:#3a3646;letter-spacing:0.273px;">Saturday,</div>
<div class="t" style="left:884.94px;top:606px;font-size:10.30px;line-height:15px;color:#3a3646;letter-spacing:0.204px;">23 Jul</div>
<div class="t" style="left:887.79px;top:621px;font-size:10.30px;line-height:15px;color:#3a3646;letter-spacing:-0.036px;">2022</div>
<div class="t" style="left:885.04px;top:668px;font-size:10.00px;line-height:15px;color:#fff;font-weight:700;-webkit-text-stroke:0;letter-spacing:-0.433px;">MARA</div>
<div class="t" style="left:850.69px;top:683px;font-size:10.00px;line-height:15px;color:#fff;font-weight:700;-webkit-text-stroke:0;letter-spacing:0.100px;">10:00 AM - 08:00 PM</div>
<div class="b" style="left:1006.43px;top:577.67px;width:216.143px;height:140.333px;border:1px solid #9e9e9e;background:#fff"></div>
<div class="b" style="left:1007.43px;top:578.67px;width:214.143px;height:70px;background:#cdcdcd"></div>
<div class="b" style="left:1013.93px;top:655.07px;width:201px;height:55.2px;background:#9d00b1"></div>
<div class="t" style="left:1096.08px;top:592px;font-size:10.30px;line-height:15px;color:#3a3646;letter-spacing:0.246px;">Sunday,</div>
<div class="t" style="left:1101.08px;top:606px;font-size:10.30px;line-height:15px;color:#3a3646;letter-spacing:0.204px;">24 Jul</div>
<div class="t" style="left:1103.93px;top:621px;font-size:10.30px;line-height:15px;color:#3a3646;letter-spacing:-0.036px;">2022</div>
<div class="t" style="left:1101.18px;top:668px;font-size:10.00px;line-height:15px;color:#fff;font-weight:700;-webkit-text-stroke:0;letter-spacing:-0.433px;">MARA</div>
<div class="t" style="left:1066.83px;top:683px;font-size:10.00px;line-height:15px;color:#fff;font-weight:700;-webkit-text-stroke:0;letter-spacing:0.100px;">10:00 AM - 08:00 PM</div>
<div class="b" style="left:1222.57px;top:577.67px;width:216.143px;height:140.333px;border:1px solid #9e9e9e;background:#fff"></div>
<div class="b" style="left:1223.57px;top:578.67px;width:214.143px;height:70px;background:#cdcdcd"></div>
<div class="b" style="left:1230.07px;top:655.07px;width:201px;height:55.2px;background:#9d00b1"></div>
<div class="t" style="left:1311.72px;top:592px;font-size:10.30px;line-height:15px;color:#3a3646;letter-spacing:0.128px;">Monday,</div>
<div class="t" style="left:1317.22px;top:606px;font-size:10.30px;line-height:15px;color:#3a3646;letter-spacing:0.204px;">25 Jul</div>
<div class="t" style="left:1320.07px;top:621px;font-size:10.30px;line-height:15px;color:#3a3646;letter-spacing:-0.036px;">2022</div>
<div class="t" style="left:1317.32px;top:668px;font-size:10.00px;line-height:15px;color:#fff;font-weight:700;-webkit-text-stroke:0;letter-spacing:-0.433px;">MARA</div>
<div class="t" style="left:1282.97px;top:683px;font-size:10.00px;line-height:15px;color:#fff;font-weight:700;-webkit-text-stroke:0;letter-spacing:0.100px;">10:00 AM - 08:00 PM</div>
<div class="b" style="left:1438.71px;top:577.67px;width:216.143px;height:140.333px;border:1px solid #9e9e9e;background:#fff"></div>
<div class="b" style="left:1439.71px;top:578.67px;width:214.143px;height:70px;background:#cdcdcd"></div>
<div class="b" style="left:1446.21px;top:655.07px;width:201px;height:55.2px;background:#9d00b1"></div>
<div class="t" style="left:1526.71px;top:592px;font-size:10.30px;line-height:15px;color:#3a3646;letter-spacing:0.083px;">Tuesday,</div>
<div class="t" style="left:1533.36px;top:606px;font-size:10.30px;line-height:15px;color:#3a3646;letter-spacing:0.204px;">26 Jul</div>
<div class="t" style="left:1536.21px;top:621px;font-size:10.30px;line-height:15px;color:#3a3646;letter-spacing:-0.036px;">2022</div>
<div class="t" style="left:1533.46px;top:668px;font-size:10.00px;line-height:15px;color:#fff;font-weight:700;-webkit-text-stroke:0;letter-spacing:-0.433px;">MARA</div>
<div class="t" style="left:1499.11px;top:683px;font-size:10.00px;line-height:15px;color:#fff;font-weight:700;-webkit-text-stroke:0;letter-spacing:0.100px;">10:00 AM - 08:00 PM</div>
<div class="b" style="left:1654.86px;top:577.67px;width:216.143px;height:140.333px;border:1px solid #9e9e9e;background:#fff"></div>
<div class="b" style="left:1655.86px;top:578.67px;width:214.143px;height:70px;background:#cdcdcd"></div>
<div class="b" style="left:1662.36px;top:655.07px;width:201px;height:55.2px;background:#9d00b1"></div>
<div class="t" style="left:1734.51px;top:592px;font-size:10.30px;line-height:15px;color:#3a3646;letter-spacing:0.245px;">Wednesday,</div>
<div class="t" style="left:1749.51px;top:606px;font-size:10.30px;line-height:15px;color:#3a3646;letter-spacing:0.204px;">27 Jul</div>
<div class="t" style="left:1752.36px;top:621px;font-size:10.30px;line-height:15px;color:#3a3646;letter-spacing:-0.036px;">2022</div>
<div class="t" style="left:1749.61px;top:668px;font-size:10.00px;line-height:15px;color:#fff;font-weight:700;-webkit-text-stroke:0;letter-spacing:-0.433px;">MARA</div>
<div class="t" style="left:1715.26px;top:683px;font-size:10.00px;line-height:15px;color:#fff;font-weight:700;-webkit-text-stroke:0;letter-spacing:0.100px;">10:00 AM - 08:00 PM</div>
<div class="b" style="left:358px;top:718px;width:216.143px;height:140.333px;border:1px solid #9e9e9e;background:#fff"></div>
<div class="b" style="left:359px;top:719px;width:214.143px;height:70px;background:#cdcdcd"></div>
<div class="b" style="left:365.5px;top:795.4px;width:201px;height:55.2px;background:#9d00b1"></div>
<div class="t" style="left:443.95px;top:733px;font-size:10.30px;line-height:15px;color:#3a3646;letter-spacing:0.109px;">Thursday,</div>
<div class="t" style="left:452.65px;top:747px;font-size:10.30px;line-height:15px;color:#3a3646;letter-spacing:0.204px;">28 Jul</div>
<div class="t" style="left:455.50px;top:761px;font-size:10.30px;line-height:15px;color:#3a3646;letter-spacing:-0.036px;">2022</div>
<div class="t" style="left:452.75px;top:809px;font-size:10.00px;line-height:15px;color:#fff;font-weight:700;-webkit-text-stroke:0;letter-spacing:-0.433px;">MARA</div>
<div class="t" style="left:418.40px;top:823px;font-size:10.00px;line-height:15px;color:#fff;font-weight:700;-webkit-text-stroke:0;letter-spacing:0.100px;">10:00 AM - 08:00 PM</div>
<div class="b" style="left:574.14px;top:718px;width:216.143px;height:140.333px;border:1px solid #9e9e9e;background:#fff"></div>
<div class="b" style="left:575.14px;top:719px;width:214.143px;height:70px;background:#cdcdcd"></div>
<div class="b" style="left:581.64px;top:795.4px;width:201px;height:55.2px;background:#9d00b1"></div>
<div class="t" style="left:665.79px;top:733px;font-size:10.30px;line-height:15px;color:#3a3646;letter-spacing:0.631px;">Friday,</div>
<div class="t" style="left:668.79px;top:747px;font-size:10.30px;line-height:15px;color:#3a3646;letter-spacing:0.204px;">29 Jul</div>
<div class="t" style="left:671.64px;top:761px;font-size:10.30px;line-height:15px;color:#3a3646;letter-spacing:-0.036px;">2022</div>
<div class="t" style="left:668.89px;top:809px;font-size:10.00px;line-height:15px;color:#fff;font-weight:700;-webkit-text-stroke:0;letter-spacing:-0.433px;">MARA</div>
<div class="t" style="left:634.54px;top:823px;font-size:10.00px;line-height:15px;color:#fff;font-weight:700;-webkit-text-stroke:0;letter-spacing:0.100px;">10:00 AM - 08:00 PM</div>
<div class="b" style="left:790.29px;top:718px;width:216.143px;height:140.333px;border:1px solid #9e9e9e;background:#fff"></div>
<div class="b" style="left:791.29px;top:719px;width:214.143px;height:70px;background:#cdcdcd"></div>
<div class="b" style="left:797.79px;top:795.4px;width:201px;height:55.2px;background:#9d00b1"></div>
<div class="t" style="left:876.44px;top:733px;font-size:10.30px;line-height:15px;color:#3a3646;letter-spacing:0.273px;">Saturday,</div>
<div class="t" style="left:884.94px;top:747px;font-size:10.30px;line-height:15px;color:#3a3646;letter-spacing:0.204px;">30 Jul</div>
<div class="t" style="left:887.79px;top:761px;font-size:10.30px;line-height:15px;color:#3a3646;letter-spacing:-0.036px;">2022</div>
<div class="t" style="left:885.04px;top:809px;font-size:10.00px;line-height:15px;color:#fff;font-weight:700;-webkit-text-stroke:0;letter-spacing:-0.433px;">MARA</div>
<div class="t" style="left:850.69px;top:823px;font-size:10.00px;line-height:15px;color:#fff;font-weight:700;-webkit-text-stroke:0;letter-spacing:0.100px;">10:00 AM - 08:00 PM</div>
<div class="b" style="left:1006.43px;top:718px;width:216.143px;height:140.333px;border:1px solid #9e9e9e;background:#fff"></div>
<div class="b" style="left:1007.43px;top:719px;width:214.143px;height:70px;background:#cdcdcd"></div>
<div class="b" style="left:1013.93px;top:795.4px;width:201px;height:55.2px;background:#9d00b1"></div>
<div class="t" style="left:1096.08px;top:733px;font-size:10.30px;line-height:15px;color:#3a3646;letter-spacing:0.246px;">Sunday,</div>
<div class="t" style="left:1101.08px;top:747px;font-size:10.30px;line-height:15px;color:#3a3646;letter-spacing:0.204px;">31 Jul</div>
<div class="t" style="left:1103.93px;top:761px;font-size:10.30px;line-height:15px;color:#3a3646;letter-spacing:-0.036px;">2022</div>
<div class="t" style="left:1101.18px;top:809px;font-size:10.00px;line-height:15px;color:#fff;font-weight:700;-webkit-text-stroke:0;letter-spacing:-0.433px;">MARA</div>
<div class="t" style="left:1066.83px;top:823px;font-size:10.00px;line-height:15px;color:#fff;font-weight:700;-webkit-text-stroke:0;letter-spacing:0.100px;">10:00 AM - 08:00 PM</div>
<div class="b" style="left:1222.57px;top:718px;width:216.143px;height:140.333px;border:1px solid #9e9e9e;background:#fff"></div>
<div class="b" style="left:1223.57px;top:719px;width:214.143px;height:70px;background:#cdcdcd"></div>
<div class="b" style="left:1230.07px;top:795.4px;width:201px;height:55.2px;background:#9d00b1"></div>
<div class="t" style="left:1311.72px;top:733px;font-size:10.30px;line-height:15px;color:#3a3646;letter-spacing:0.128px;">Monday,</div>
<div class="t" style="left:1315.22px;top:747px;font-size:10.30px;line-height:15px;color:#3a3646;letter-spacing:0.086px;">01 Aug</div>
<div class="t" style="left:1320.07px;top:761px;font-size:10.30px;line-height:15px;color:#3a3646;letter-spacing:-0.036px;">2022</div>
<div class="t" style="left:1317.32px;top:809px;font-size:10.00px;line-height:15px;color:#fff;font-weight:700;-webkit-text-stroke:0;letter-spacing:-0.433px;">MARA</div>
<div class="t" style="left:1282.97px;top:823px;font-size:10.00px;line-height:15px;color:#fff;font-weight:700;-webkit-text-stroke:0;letter-spacing:0.100px;">10:00 AM - 08:00 PM</div>
<div class="b" style="left:1438.71px;top:718px;width:216.143px;height:140.333px;border:1px solid #9e9e9e;background:#fff"></div>
<div class="b" style="left:1439.71px;top:719px;width:214.143px;height:70px;background:#cdcdcd"></div>
<div class="b" style="left:1446.21px;top:795.4px;width:201px;height:55.2px;background:#9d00b1"></div>
<div class="t" style="left:1526.71px;top:733px;font-size:10.30px;line-height:15px;color:#3a3646;letter-spacing:0.083px;">Tuesday,</div>
<div class="t" style="left:1531.36px;top:747px;font-size:10.30px;line-height:15px;color:#3a3646;letter-spacing:0.086px;">02 Aug</div>
<div class="t" style="left:1536.21px;top:761px;font-size:10.30px;line-height:15px;color:#3a3646;letter-spacing:-0.036px;">2022</div>
<div class="t" style="left:1533.46px;top:809px;font-size:10.00px;line-height:15px;color:#fff;font-weight:700;-webkit-text-stroke:0;letter-spacing:-0.433px;">MARA</div>
<div class="t" style="left:1499.11px;top:823px;font-size:10.00px;line-height:15px;color:#fff;font-weight:700;-webkit-text-stroke:0;letter-spacing:0.100px;">10:00 AM - 08:00 PM</div>
<div class="b" style="left:1654.86px;top:718px;width:216.143px;height:140.333px;border:1px solid #9e9e9e;background:#fff"></div>
<div class="b" style="left:1655.86px;top:719px;width:214.143px;height:70px;background:#cdcdcd"></div>
<div class="b" style="left:1662.36px;top:795.4px;width:201px;height:55.2px;background:#9d00b1"></div>
<div class="t" style="left:1734.51px;top:733px;font-size:10.30px;line-height:15px;color:#3a3646;letter-spacing:0.245px;">Wednesday,</div>
<div class="t" style="left:1747.51px;top:747px;font-size:10.30px;line-height:15px;color:#3a3646;letter-spacing:0.086px;">03 Aug</div>
<div class="t" style="left:1752.36px;top:761px;font-size:10.30px;line-height:15px;color:#3a3646;letter-spacing:-0.036px;">2022</div>
<div class="t" style="left:1749.61px;top:809px;font-size:10.00px;line-height:15px;color:#fff;font-weight:700;-webkit-text-stroke:0;letter-spacing:-0.433px;">MARA</div>
<div class="t" style="left:1715.26px;top:823px;font-size:10.00px;line-height:15px;color:#fff;font-weight:700;-webkit-text-stroke:0;letter-spacing:0.100px;">10:00 AM - 08:00 PM</div>
<div class="b" style="left:358px;top:858.33px;width:216.143px;height:140.333px;border:1px solid #9e9e9e;background:#fff"></div>
<div class="b" style="left:359px;top:859.33px;width:214.143px;height:70px;background:#cdcdcd"></div>
<div class="b" style="left:365.5px;top:935.73px;width:201px;height:55.2px;background:#9d00b1"></div>
<div class="t" style="left:443.95px;top:873px;font-size:10.30px;line-height:15px;color:#3a3646;letter-spacing:0.109px;">Thursday,</div>
<div class="t" style="left:450.65px;top:887px;font-size:10.30px;line-height:15px;color:#3a3646;letter-spacing:0.086px;">04 Aug</div>
<div class="t" style="left:455.50px;top:902px;font-size:10.30px;line-height:15px;color:#3a3646;letter-spacing:-0.036px;">2022</div>
<div class="t" style="left:452.75px;top:949px;font-size:10.00px;line-height:15px;color:#fff;font-weight:700;-webkit-text-stroke:0;letter-spacing:-0.433px;">MARA</div>
<div class="t" style="left:418.40px;top:963px;font-size:10.00px;line-height:15px;color:#fff;font-weight:700;-webkit-text-stroke:0;letter-spacing:0.100px;">10:00 AM - 08:00 PM</div>
<div class="b" style="left:574.14px;top:858.33px;width:216.143px;height:140.333px;border:1px solid #9e9e9e;background:#fff"></div>
<div class="b" style="left:575.14px;top:859.33px;width:214.143px;height:70px;background:#cdcdcd"></div>
<div class="b" style="left:581.64px;top:935.73px;width:201px;height:55.2px;background:#9d00b1"></div>
<div class="t" style="left:665.79px;top:873px;font-size:10.30px;line-height:15px;color:#3a3646;letter-spacing:0.631px;">Friday,</div>
<div class="t" style="left:666.79px;top:887px;font-size:10.30px;line-height:15px;color:#3a3646;letter-spacing:0.086px;">05 Aug</div>
<div class="t" style="left:671.64px;top:902px;font-size:10.30px;line-height:15px;color:#3a3646;letter-spacing:-0.036px;">2022</div>
<div class="t" style="left:668.89px;top:949px;font-size:10.00px;line-height:15px;color:#fff;font-weight:700;-webkit-text-stroke:0;letter-spacing:-0.433px;">MARA</div>
<div class="t" style="left:634.54px;top:963px;font-size:10.00px;line-height:15px;color:#fff;font-weight:700;-webkit-text-stroke:0;letter-spacing:0.100px;">10:00 AM - 08:00 PM</div>
<div class="b" style="left:790.29px;top:858.33px;width:216.143px;height:140.333px;border:1px solid #9e9e9e;background:#fff"></div>
<div class="b" style="left:791.29px;top:859.33px;width:214.143px;height:70px;background:#cdcdcd"></div>
<div class="b" style="left:797.79px;top:935.73px;width:201px;height:55.2px;background:#9d00b1"></div>
<div class="t" style="left:876.44px;top:873px;font-size:10.30px;line-height:15px;color:#3a3646;letter-spacing:0.273px;">Saturday,</div>
<div class="t" style="left:882.94px;top:887px;font-size:10.30px;line-height:15px;color:#3a3646;letter-spacing:0.086px;">06 Aug</div>
<div class="t" style="left:887.79px;top:902px;font-size:10.30px;line-height:15px;color:#3a3646;letter-spacing:-0.036px;">2022</div>
<div class="t" style="left:885.04px;top:949px;font-size:10.00px;line-height:15px;color:#fff;font-weight:700;-webkit-text-stroke:0;letter-spacing:-0.433px;">MARA</div>
<div class="t" style="left:850.69px;top:963px;font-size:10.00px;line-height:15px;color:#fff;font-weight:700;-webkit-text-stroke:0;letter-spacing:0.100px;">10:00 AM - 08:00 PM</div>
<div class="b" style="left:1006.43px;top:858.33px;width:216.143px;height:140.333px;border:1px solid #9e9e9e;background:#fff"></div>
<div class="b" style="left:1007.43px;top:859.33px;width:214.143px;height:70px;background:#cdcdcd"></div>
<div class="b" style="left:1013.93px;top:935.73px;width:201px;height:55.2px;background:#9d00b1"></div>
<div class="t" style="left:1096.08px;top:873px;font-size:10.30px;line-height:15px;color:#3a3646;letter-spacing:0.246px;">Sunday,</div>
<div class="t" style="left:1099.08px;top:887px;font-size:10.30px;line-height:15px;color:#3a3646;letter-spacing:0.086px;">07 Aug</div>
<div class="t" style="left:1103.93px;top:902px;font-size:10.30px;line-height:15px;color:#3a3646;letter-spacing:-0.036px;">2022</div>
<div class="t" style="left:1101.18px;top:949px;font-size:10.00px;line-height:15px;color:#fff;font-weight:700;-webkit-text-stroke:0;letter-spacing:-0.433px;">MARA</div>
<div class="t" style="left:1066.83px;top:963px;font-size:10.00px;line-height:15px;color:#fff;font-weight:700;-webkit-text-stroke:0;letter-spacing:0.100px;">10:00 AM - 08:00 PM</div>
<div class="b" style="left:1222.57px;top:858.33px;width:216.143px;height:140.333px;border:1px solid #9e9e9e;background:#fff"></div>
<div class="b" style="left:1223.57px;top:859.33px;width:214.143px;height:70px;background:#cdcdcd"></div>
<div class="b" style="left:1230.07px;top:935.73px;width:201px;height:55.2px;background:#9d00b1"></div>
<div class="t" style="left:1311.72px;top:873px;font-size:10.30px;line-height:15px;color:#3a3646;letter-spacing:0.128px;">Monday,</div>
<div class="t" style="left:1315.22px;top:887px;font-size:10.30px;line-height:15px;color:#3a3646;letter-spacing:0.086px;">08 Aug</div>
<div class="t" style="left:1320.07px;top:902px;font-size:10.30px;line-height:15px;color:#3a3646;letter-spacing:-0.036px;">2022</div>
<div class="t" style="left:1317.32px;top:949px;font-size:10.00px;line-height:15px;color:#fff;font-weight:700;-webkit-text-stroke:0;letter-spacing:-0.433px;">MARA</div>
<div class="t" style="left:1282.97px;top:963px;font-size:10.00px;line-height:15px;color:#fff;font-weight:700;-webkit-text-stroke:0;letter-spacing:0.100px;">10:00 AM - 08:00 PM</div>
<div class="b" style="left:1438.71px;top:858.33px;width:216.143px;height:140.333px;border:1px solid #9e9e9e;background:#fff"></div>
<div class="b" style="left:1439.71px;top:859.33px;width:214.143px;height:70px;background:#cdcdcd"></div>
<div class="b" style="left:1446.21px;top:935.73px;width:201px;height:55.2px;background:#9d00b1"></div>
<div class="t" style="left:1526.71px;top:873px;font-size:10.30px;line-height:15px;color:#3a3646;letter-spacing:0.083px;">Tuesday,</div>
<div class="t" style="left:1531.36px;top:887px;font-size:10.30px;line-height:15px;color:#3a3646;letter-spacing:0.086px;">09 Aug</div>
<div class="t" style="left:1536.21px;top:902px;font-size:10.30px;line-height:15px;color:#3a3646;letter-spacing:-0.036px;">2022</div>
<div class="t" style="left:1533.46px;top:949px;font-size:10.00px;line-height:15px;color:#fff;font-weight:700;-webkit-text-stroke:0;letter-spacing:-0.433px;">MARA</div>
<div class="t" style="left:1499.11px;top:963px;font-size:10.00px;line-height:15px;color:#fff;font-weight:700;-webkit-text-stroke:0;letter-spacing:0.100px;">10:00 AM - 08:00 PM</div>
<div class="b" style="left:1654.86px;top:858.33px;width:216.143px;height:140.333px;border:1px solid #9e9e9e;background:#fff"></div>
<div class="b" style="left:1655.86px;top:859.33px;width:214.143px;height:70px;background:#cdcdcd"></div>
<div class="b" style="left:1662.36px;top:935.73px;width:201px;height:55.2px;background:#9d00b1"></div>
<div class="t" style="left:1734.51px;top:873px;font-size:10.30px;line-height:15px;color:#3a3646;letter-spacing:0.245px;">Wednesday,</div>
<div class="t" style="left:1747.51px;top:887px;font-size:10.30px;line-height:15px;color:#3a3646;letter-spacing:0.086px;">10 Aug</div>
<div class="t" style="left:1752.36px;top:902px;font-size:10.30px;line-height:15px;color:#3a3646;letter-spacing:-0.036px;">2022</div>
<div class="t" style="left:1749.61px;top:949px;font-size:10.00px;line-height:15px;color:#fff;font-weight:700;-webkit-text-stroke:0;letter-spacing:-0.433px;">MARA</div>
<div class="t" style="left:1715.26px;top:963px;font-size:10.00px;line-height:15px;color:#fff;font-weight:700;-webkit-text-stroke:0;letter-spacing:0.100px;">10:00 AM - 08:00 PM</div>
<svg style="left:1765px;top:192px" width="95" height="105" viewBox="0 0 852 942">
<defs><filter id="bl" x="-10%" y="-10%" width="120%" height="120%"><feGaussianBlur stdDeviation="7"/></filter>
<filter id="bl2" x="-10%" y="-10%" width="120%" height="120%"><feGaussianBlur stdDeviation="3"/></filter>
<clipPath id="cp"><rect x="0" y="0" width="852" height="942"/></clipPath>
<linearGradient id="hg" x1="0" y1="0" x2="1" y2="0"><stop offset="0" stop-color="#a98a5e"/><stop offset=".45" stop-color="#c3a571"/><stop offset=".8" stop-color="#d6bd8a"/><stop offset="1" stop-color="#b89a68"/></linearGradient>
</defs>
<g clip-path="url(#cp)">
<g filter="url(#bl)">
<path d="M62 942 V730 Q120 690 215 640 L300 600 H560 L640 672 Q730 700 782 735 V942 Z" fill="#f2f2f5"/>
<path d="M62 942 V760 Q90 740 120 730 L150 942 Z" fill="#e4e5ea"/>
<path d="M430 72 Q340 78 290 160 Q232 250 226 330 Q205 420 246 520 Q210 580 180 612 Q215 650 262 630 Q300 610 320 560 L540 560 Q560 620 600 650 Q640 690 668 660 Q700 600 672 540 Q690 470 668 400 Q680 330 640 250 Q610 150 540 105 Q490 70 430 72 Z" fill="url(#hg)"/>
<path d="M300 300 Q330 160 470 150 Q560 190 585 330 Q600 240 540 150 Q470 95 380 120 Q310 170 300 300 Z" fill="#a5845a"/>
<path d="M262 300 Q240 420 280 520 Q240 590 200 612 Q250 640 300 590 Q320 520 300 440 Q285 360 300 290 Z" fill="#9c7b50"/>
<path d="M575 330 Q590 440 560 540 Q590 620 640 660 Q610 580 620 500 Q640 420 600 330 Z" fill="#a8885a"/>
<path d="M420 85 Q520 90 580 180 Q630 260 650 380 Q640 260 600 190 Q540 100 420 85 Z" fill="#e0caa0"/>
<path d="M335 560 H525 V700 L440 760 L335 700 Z" fill="#ddb59b"/>
<path d="M292 350 Q290 240 360 205 Q430 180 510 205 Q575 250 570 350 Q572 450 520 540 Q470 610 425 610 Q380 610 335 540 Q292 450 292 350 Z" fill="#ebc5ac"/>
<path d="M300 420 Q320 520 380 560 Q340 480 330 400 Z" fill="#e2b8a0"/>
<path d="M560 420 Q540 520 480 570 Q520 490 535 400 Z" fill="#e2b8a0"/>
<path d="M268 600 L300 585 Q360 700 440 735 Q500 700 545 590 L575 610 Q540 700 490 745 L410 880 L380 790 Q300 700 268 600 Z" fill="#ccdaef"/>
</g>
<g filter="url(#bl2)">
<path d="M318 322 Q350 305 385 322" stroke="#8a6d55" stroke-width="9" fill="none"/>
<path d="M465 322 Q500 305 535 322" stroke="#8a6d55" stroke-width="9" fill="none"/>
<ellipse cx="352" cy="342" rx="22" ry="9" fill="#5f6478"/>
<ellipse cx="498" cy="342" rx="22" ry="9" fill="#5f6478"/>
<path d="M415 350 Q405 410 400 428 Q425 445 452 428" stroke="#d6a78e" stroke-width="10" fill="none"/>
<path d="M372 478 Q425 470 480 478 Q425 500 372 478 Z" fill="#d4736b" stroke="#d4736b" stroke-width="5"/>
<path d="M218 648 Q185 760 176 880" stroke="#27365e" stroke-width="13" fill="none"/>
<path d="M628 690 Q650 750 658 805" stroke="#27365e" stroke-width="13" fill="none"/>
<path d="M598 942 V870 Q600 812 658 810 Q718 812 720 870 V942" stroke="#27365e" stroke-width="13" fill="none"/>
<circle cx="176" cy="910" r="40" fill="#9a9aa2"/><circle cx="176" cy="910" r="20" fill="#55555f"/>
</g>
</g></svg>
</main>
<div class="floating-actions">
<div class="b" style="left:1868px;top:291.3px;width:46px;height:49.3px;background:#fff;border-radius:6px 0 0 6px;box-shadow:0 0 10px 1px rgba(242,242,249,.55)"></div>
<div class="b" style="left:1876.2px;top:301.3px;width:29.7px;height:29.5px;background:#f2f1f7;border-radius:4px"></div>
<div class="b" style="left:1868px;top:356.7px;width:46px;height:49.3px;background:#fff;border-radius:6px 0 0 6px;box-shadow:0 0 10px 1px rgba(242,242,249,.55)"></div>
<div class="b" style="left:1876.2px;top:366.7px;width:29.7px;height:29.5px;background:#f2f1f7;border-radius:4px"></div>
<svg style="left:1881px;top:305px" width="20" height="20" viewBox="0 0 20 20" fill="none" stroke="#e8b43a" stroke-width="1.35"><path d="M1 4.3 H11.6 M1.7 4.3 L4 11.3 H13.1 L16 1.7 H18.1"/><circle cx="5.7" cy="15.9" r="2"/><circle cx="11.4" cy="15.9" r="2"/></svg>
<svg style="left:1882px;top:371px" width="18" height="18" viewBox="0 0 18 18"><circle cx="9" cy="9" r="8.9" fill="#6fc5b1"/><path d="M5.4 4.4 Q4.4 5.2 4.8 6.6 Q6.4 11.2 11 13.2 Q12.6 13.6 13.4 12.4 L11.6 10.6 L10.4 11.4 Q8.2 10.4 7 8 L7.8 6.8 Z" fill="#fff"/></svg>
</div>
<div class="scrollbar">
<div class="b" style="left:1914px;top:0px;width:6px;height:969px;background:#f1f1f1"></div>
<div class="b" style="left:1914px;top:0px;width:6px;height:121px;background:#888"></div>
</div>
</div>
</body></html>
